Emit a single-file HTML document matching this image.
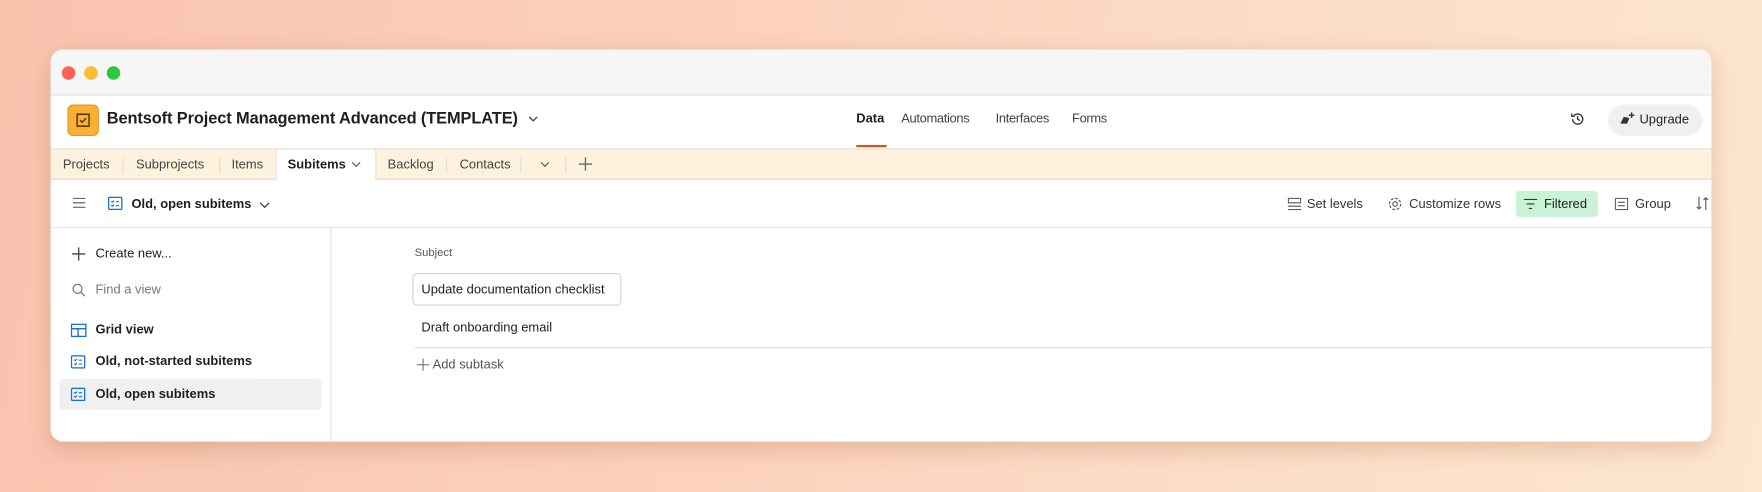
<!DOCTYPE html>
<html><head><meta charset="utf-8"><style>
*{box-sizing:border-box;margin:0;padding:0}
html,body{width:1762px;height:492px;overflow:hidden}
body{background:linear-gradient(100deg,#f9c3ae 0%,#fcd5bf 50%,#fde7cf 100%);font-family:"Liberation Sans","DejaVu Sans",sans-serif;color:#1f1f1f}
#s{position:absolute;left:0;top:0;width:1568px;height:438px;transform:scale(1.1237);transform-origin:0 0}
.a{position:absolute;white-space:nowrap}
.win{position:absolute;left:45px;top:44px;width:1478px;height:349px;border-radius:11px;background:#fff;overflow:hidden;box-shadow:0 6px 20px rgba(150,80,50,.25)}
.t{font-size:12px;line-height:14px}
.n{font-size:11.5px;line-height:14px}
.g{color:#555}
svg{position:absolute}
</style></head><body><div id="s">
<div class="win">
 <div class="a" style="left:0;top:0;width:1478px;height:41px;background:#f6f6f6;border-bottom:1px solid #e2e2e2"></div>
 <div class="a" style="left:10px;top:15px;width:12px;height:12px;border-radius:6px;background:#fe5f57"></div>
 <div class="a" style="left:30px;top:15px;width:12px;height:12px;border-radius:6px;background:#febc2e"></div>
 <div class="a" style="left:50px;top:15px;width:12px;height:12px;border-radius:6px;background:#28c840"></div>
 <!-- header -->
 <div class="a" style="left:15px;top:49px;width:28px;height:28px;border-radius:5px;background:#fbb034;border:1px solid #e49a20"></div>
 <svg style="left:23px;top:57px" width="12" height="12" viewBox="0 0 12 12"><rect x=".7" y=".7" width="10.6" height="10.6" fill="none" stroke="#4a3000" stroke-width="1.3"/><path d="M3.3 6l1.8 1.8 3.5-3.6" fill="none" stroke="#4a3000" stroke-width="1.2"/></svg>
 <div class="a" style="left:50px;top:53px;font-size:14.6px;font-weight:bold;line-height:18px;letter-spacing:-0.1px">Bentsoft Project Management Advanced (TEMPLATE)</div>
 <svg style="left:425px;top:59px" width="9" height="6"><path d="M1 1l3.5 3.5L8 1" fill="none" stroke="#444" stroke-width="1.2"/></svg>
 <div class="a n" style="left:717px;top:55px;font-weight:bold">Data</div>
 <div class="a" style="left:717px;top:85px;width:27px;height:2px;background:#d9541e"></div>
 <div class="a n" style="left:757px;top:55px;color:#444;letter-spacing:-0.3px">Automations</div>
 <div class="a n" style="left:841px;top:55px;color:#444;letter-spacing:-0.3px">Interfaces</div>
 <div class="a n" style="left:909px;top:55px;color:#444;letter-spacing:-0.3px">Forms</div>
 <svg style="left:1352px;top:55px" width="14" height="14" viewBox="0 0 14 14"><path d="M2.5 7a4.5 4.5 0 1 0 1.3-3.2M1.8 2v2.5h2.5M7 4.5V7l2 1.3" fill="none" stroke="#333" stroke-width="1.2"/></svg>
 <div class="a" style="left:1386px;top:49px;width:84px;height:28px;border-radius:14px;background:#f0f0f0"></div>
 <svg style="left:1396px;top:55px" width="16" height="14" viewBox="0 0 16 14"><path d="M1 11l3-6 5 1-2 5z" fill="#333"/><path d="M11 1v5M8.5 3.5h5" stroke="#333" stroke-width="1.3"/></svg>
 <div class="a n" style="left:1414px;top:56px">Upgrade</div>
 <!-- tabs -->
 <div class="a" style="left:0;top:88px;width:1478px;height:28px;background:#fdf2dd;border-top:1px solid #e8e2d6;border-bottom:1px solid #e8dcc4"></div>
 <div class="a n" style="left:11px;top:96px;color:#444">Projects</div>
 <div class="a" style="left:64px;top:96px;width:1px;height:14px;background:#ddd"></div>
 <div class="a n" style="left:76px;top:96px;color:#444">Subprojects</div>
 <div class="a" style="left:150px;top:96px;width:1px;height:14px;background:#ddd"></div>
 <div class="a n" style="left:161px;top:96px;color:#444">Items</div>
 <div class="a" style="left:200px;top:88px;width:90px;height:29px;background:#fff;border:1px solid #e2ddd2;border-bottom:none;border-radius:3px 3px 0 0"></div>
 <div class="a n" style="left:211px;top:96px;font-weight:bold">Subitems</div>
 <svg style="left:268px;top:100px" width="8" height="5"><path d="M.5.5l3.5 3.5L7.5.5" fill="none" stroke="#555"/></svg>
 <div class="a n" style="left:300px;top:96px;color:#444">Backlog</div>
 <div class="a" style="left:352px;top:96px;width:1px;height:14px;background:#ddd"></div>
 <div class="a n" style="left:364px;top:96px;color:#444">Contacts</div>
 <div class="a" style="left:418px;top:96px;width:1px;height:14px;background:#ddd"></div>
 <svg style="left:436px;top:100px" width="8" height="5"><path d="M.5.5l3.5 3.5L7.5.5" fill="none" stroke="#555"/></svg>
 <div class="a" style="left:458px;top:96px;width:1px;height:14px;background:#ddd"></div>
 <svg style="left:470px;top:96px" width="12" height="12"><path d="M6 0v12M0 6h12" stroke="#666" stroke-width="1.2"/></svg>
 <!-- toolbar -->
 <div class="a" style="left:0;top:158px;width:1478px;height:1px;background:#e4e4e4"></div>
 <svg style="left:20px;top:132px" width="11" height="9"><path d="M0 .5h11M0 4.5h11M0 8.5h11" stroke="#555"/></svg>
 <svg style="left:51px;top:131px" width="13" height="12" viewBox="0 0 13 12"><rect x=".6" y=".6" width="11.8" height="10.8" rx="1" fill="none" stroke="#1a6fc9" stroke-width="1.2"/><path d="M3 4l1 1 1.5-1.5M3 7.5l1 1 1.5-1.5M7 4.5h3M7 8h3" stroke="#1a6fc9" fill="none"/></svg>
 <div class="a n" style="left:72px;top:131px;font-weight:bold">Old, open subitems</div>
 <svg style="left:186px;top:136px" width="9" height="6"><path d="M.5.5l4 4 4-4" fill="none" stroke="#444" stroke-width="1.2"/></svg>
 <svg style="left:1101px;top:132px" width="12" height="11"><rect x=".5" y=".5" width="11" height="4" fill="none" stroke="#555"/><path d="M0 7.5h12M0 10.5h12" stroke="#555"/></svg>
 <div class="a n" style="left:1118px;top:131px;color:#333">Set levels</div>
 <svg style="left:1190px;top:131px" width="13" height="13" viewBox="0 0 13 13"><circle cx="6.5" cy="6.5" r="2" fill="none" stroke="#555"/><circle cx="6.5" cy="6.5" r="5" fill="none" stroke="#555" stroke-dasharray="2.5 1.4"/></svg>
 <div class="a n" style="left:1209px;top:131px;color:#333">Customize rows</div>
 <div class="a" style="left:1304px;top:126px;width:73px;height:23px;border-radius:3px;background:#c9f2d6"></div>
 <svg style="left:1311px;top:133px" width="12" height="9"><path d="M0 .5h12M2.5 4.5h7M4.5 8.5h3" stroke="#333"/></svg>
 <div class="a n" style="left:1329px;top:131px;color:#1f1f1f">Filtered</div>
 <svg style="left:1392px;top:132px" width="12" height="11"><rect x=".5" y=".5" width="11" height="10" rx="1" fill="none" stroke="#555"/><path d="M3 4h6M3 7h6" stroke="#555"/></svg>
 <div class="a n" style="left:1410px;top:131px;color:#333">Group</div>
 <svg style="left:1464px;top:131px" width="12" height="12"><path d="M3 0v11M1 9l2 2 2-2M9 12V1M7 3l2-2 2 2" fill="none" stroke="#555"/></svg>
 <!-- sidebar -->
 <div class="a" style="left:249px;top:159px;width:1px;height:190px;background:#e4e4e4"></div>
 <svg style="left:19px;top:176px" width="12" height="12"><path d="M6 0v12M0 6h12" stroke="#444" stroke-width="1.2"/></svg>
 <div class="a n" style="left:40px;top:175px">Create new...</div>
 <svg style="left:19px;top:208px" width="12" height="12"><circle cx="5" cy="5" r="4" fill="none" stroke="#666"/><path d="M8 8l3.5 3.5" stroke="#666"/></svg>
 <div class="a n" style="left:40px;top:207px;color:#777">Find a view</div>
 <svg style="left:18px;top:244px" width="14" height="12"><rect x=".6" y=".6" width="12.8" height="10.8" fill="none" stroke="#1a6fc9" stroke-width="1.2"/><path d="M0 4.5h14M6.5 4.5v7" stroke="#1a6fc9" stroke-width="1.2"/></svg>
 <div class="a n" style="left:40px;top:243px;font-weight:bold">Grid view</div>
 <svg style="left:18px;top:272px" width="13" height="12" viewBox="0 0 13 12"><rect x=".6" y=".6" width="11.8" height="10.8" rx="1" fill="none" stroke="#1a6fc9" stroke-width="1.2"/><path d="M3 4l1 1 1.5-1.5M3 7.5l1 1 1.5-1.5M7 4.5h3M7 8h3" stroke="#1a6fc9" fill="none"/></svg>
 <div class="a n" style="left:40px;top:271px;font-weight:bold">Old, not-started subitems</div>
 <div class="a" style="left:8px;top:293px;width:233px;height:28px;border-radius:3px;background:#f0f0f0"></div>
 <svg style="left:18px;top:301px" width="13" height="12" viewBox="0 0 13 12"><rect x=".6" y=".6" width="11.8" height="10.8" rx="1" fill="none" stroke="#1a6fc9" stroke-width="1.2"/><path d="M3 4l1 1 1.5-1.5M3 7.5l1 1 1.5-1.5M7 4.5h3M7 8h3" stroke="#1a6fc9" fill="none"/></svg>
 <div class="a n" style="left:40px;top:300px;font-weight:bold">Old, open subitems</div>
 <!-- main -->
 <div class="a" style="left:324px;top:176px;font-size:10px;color:#555">Subject</div>
 <div class="a" style="left:322px;top:199px;width:186px;height:29px;border:1px solid #d4d4d4;border-radius:4px;background:#fff"></div>
 <div class="a n" style="left:330px;top:207px">Update documentation checklist</div>
 <div class="a n" style="left:330px;top:241px">Draft onboarding email</div>
 <div class="a" style="left:324px;top:265px;width:1154px;height:1px;background:#e0e0e0"></div>
 <svg style="left:326px;top:275px" width="11" height="11"><path d="M5.5 0v11M0 5.5h11" stroke="#777"/></svg>
 <div class="a n" style="left:340px;top:274px;color:#555">Add subtask</div>
</div>
</div></body></html>
